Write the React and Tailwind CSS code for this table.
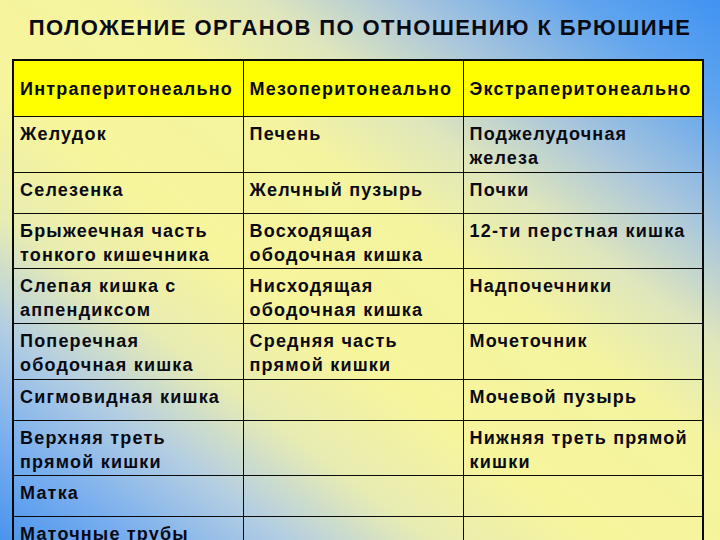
import React from "react";

const rows = [
  { h: "h-[56px]", c: [["Желудок"], ["Печень"], ["Поджелудочная", "железа"]] },
  { h: "h-[41px]", c: [["Селезенка"], ["Желчный пузырь"], ["Почки"]] },
  { h: "h-[55px]", c: [["Брыжеечная часть", "тонкого кишечника"], ["Восходящая", "ободочная кишка"], ["12-ти перстная кишка"]] },
  { h: "h-[55px]", c: [["Слепая кишка с", "аппендиксом"], ["Нисходящая", "ободочная кишка"], ["Надпочечники"]] },
  { h: "h-[56px]", c: [["Поперечная", "ободочная кишка"], ["Средняя часть", "прямой кишки"], ["Мочеточник"]] },
  { h: "h-[41px]", c: [["Сигмовидная кишка"], [], ["Мочевой пузырь"]] },
  { h: "h-[55px]", c: [["Верхняя треть", "прямой кишки"], [], ["Нижняя треть прямой", "кишки"]] },
  { h: "h-[41px]", c: [["Матка"], [], []] },
  { h: "h-[41px]", c: [["Маточные трубы"], [], []] },
];

export default function App() {
  return (
    <div
      className="w-[720px] h-[540px] overflow-hidden bg-[linear-gradient(to_bottom_left,#3f93f2_0%,#62a5ee_10%,#a9c6dc_22%,#dfe6bc_32%,#f4f4a0_42%,#f7f59c_58%,#e8ecb2_70%,#b4cee2_80%,#7cb0ee_90%,#4a94ee_100%)] text-[#0a0a14]"
      style={{ fontFamily: '"Liberation Sans", Arial, sans-serif' }}
    >
      <div className="h-[59px] pt-[14px] text-center text-[22px] leading-[28px] font-bold tracking-[1.4px] whitespace-nowrap">
        ПОЛОЖЕНИЕ ОРГАНОВ ПО ОТНОШЕНИЮ К БРЮШИНЕ
      </div>
      <table className="ml-[12px] w-[690px] border-collapse border-2 border-[#0a0a0a] table-fixed text-[18px] leading-[24px] font-bold tracking-[1.2px]">
        <colgroup>
          <col className="w-[230px]" />
          <col className="w-[220px]" />
          <col className="w-[240px]" />
        </colgroup>
        <tbody>
          <tr className="h-[56px] bg-[#ffff00]">
            <td className="border border-[#0a0a0a] px-[6px] align-middle pt-[2px] whitespace-nowrap">Интраперитонеально</td>
            <td className="border border-[#0a0a0a] px-[6px] align-middle pt-[2px] whitespace-nowrap">Мезоперитонеально</td>
            <td className="border border-[#0a0a0a] px-[6px] align-middle pt-[2px] whitespace-nowrap">Экстраперитонеально</td>
          </tr>
          {rows.map((r, i) => (
            <tr key={i} className={r.h}>
              {r.c.map((lines, j) => (
                <td key={j} className="border border-[#0a0a0a] px-[6px] pt-[5px] pb-0 align-top whitespace-nowrap">
                  {lines.map((t, k) => (
                    <div key={k}>{t}</div>
                  ))}
                </td>
              ))}
            </tr>
          ))}
        </tbody>
      </table>
    </div>
  );
}
